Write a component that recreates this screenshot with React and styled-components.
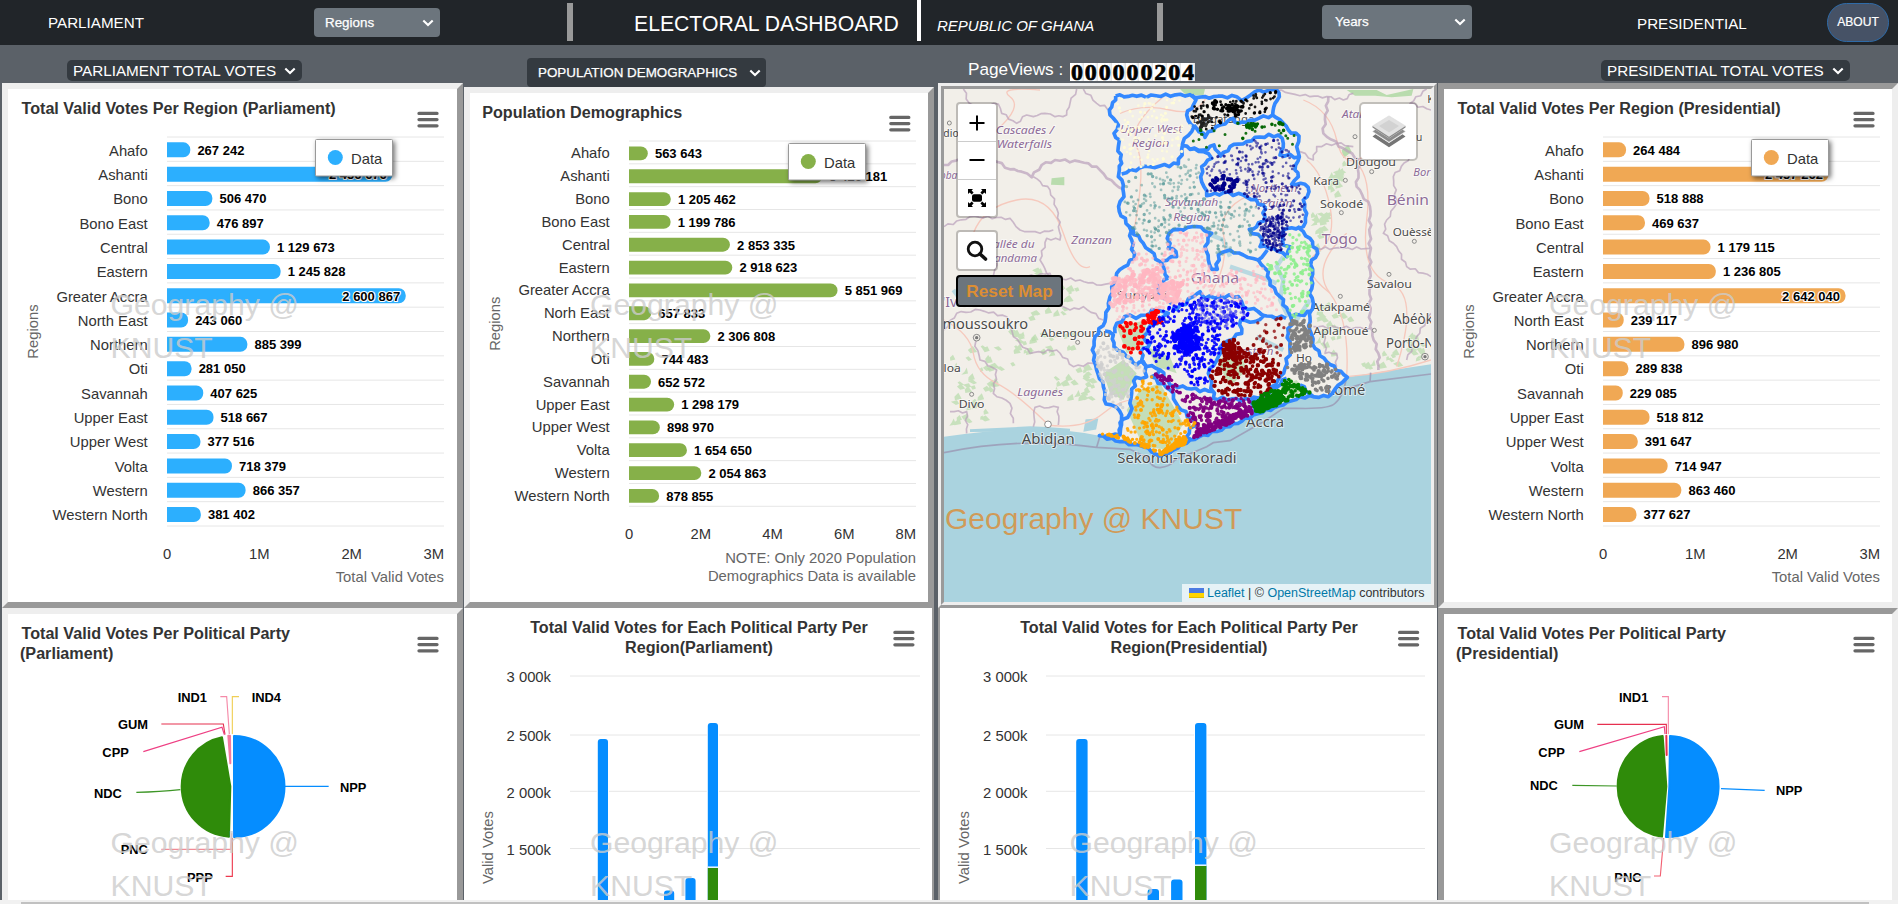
import React from "react";
import styled, { createGlobalStyle } from "styled-components";

const GlobalStyle = createGlobalStyle`
  *, *::before, *::after { box-sizing: border-box; }
  body { margin: 0; font-family: "Liberation Sans", Arial, sans-serif; overflow: hidden; }
  svg { display: block; }
  button { font-family: inherit; }
`;

const Page = styled.div`
  width: 1898px;
  height: 904px;
  display: flex;
  flex-direction: column;
  overflow: hidden;
  background: #5b6168;
`;

/* ---------- header ---------- */

const Header = styled.header`
  height: 45px;
  flex: none;
  display: flex;
  align-items: flex-start;
  background: #212529;
  color: #fff;
`;

const NavText = styled.span`
  margin-left: ${(p) => p.$gap}px;
  margin-top: ${(p) => p.$top}px;
  width: ${(p) => p.$w}px;
  font-size: ${(p) => p.$size || 15.2}px;
  line-height: 20px;
  font-style: ${(p) => (p.$italic ? "italic" : "normal")};
  white-space: nowrap;
`;

const Divider = styled.span`
  width: ${(p) => p.$w || 6}px;
  height: ${(p) => (p.$light ? 41 : 38)}px;
  margin-left: ${(p) => p.$gap}px;
  margin-top: ${(p) => (p.$light ? 0 : 3)}px;
  background: ${(p) => (p.$light ? "#fff" : "#999")};
`;

const Select = styled.button`
  display: flex;
  align-items: center;
  justify-content: space-between;
  width: ${(p) => p.$w}px;
  height: ${(p) => p.$h}px;
  margin: ${(p) => p.$top}px 0 0 ${(p) => p.$gap}px;
  padding: ${(p) => p.$pad};
  border: 0;
  border-radius: ${(p) => p.$radius || 4}px;
  background: ${(p) => (p.$dark ? "#343a40" : "#6c757d")};
  color: #fff;
  font-size: ${(p) => p.$size || 13.4}px;
  line-height: 1;
  white-space: nowrap;
  -webkit-text-stroke: ${(p) => (p.$size ? 0 : 0.25)}px #fff;
`;

const About = styled.button`
  width: 62px;
  height: 39px;
  margin: 3px 0 0 80px;
  padding: 0 0 1px;
  border: 1px solid #2f6ba8;
  border-radius: 20px;
  background: #465266;
  color: #fff;
  font-size: 12.1px;
  -webkit-text-stroke: 0.2px #fff;
`;

/* ---------- panels ---------- */

const Board = styled.main`
  height: 855px;
  flex: none;
  display: grid;
  grid-template-columns: 461px 470px 499px 460px;
  column-gap: 1px;
  padding-left: 2px;
  overflow: hidden;
`;

const Column = styled.section`
  display: flex;
  flex-direction: column;
  margin-left: ${(p) => p.$shift || 0}px;
  width: ${(p) => p.$w}px;
`;

const Toolbar = styled.div`
  height: ${(p) => p.$h}px;
  flex: none;
  display: flex;
  align-items: flex-start;
`;

const Panel = styled.div`
  position: relative;
  flex: none;
  width: 100%;
  height: ${(p) => p.$h}px;
  border: 6px ${(p) => p.$edge} #eee;
  background: #fff;
  border-color: ${(p) =>
    p.$edge === "outset" ? "#eee #999 #999 #eee" : p.$edge === "inset" ? "#999 #eee #eee #999" : "#eee"};
  border-style: ${(p) => (p.$edge === "ridge" ? "ridge" : "solid")};
  overflow: hidden;
`;

const ColumnPanel = styled.div`
  position: relative;
  flex: none;
  height: 292px;
  background: #fff;
  border-left: ${(p) => (p.$left ? 2 : 0)}px solid #999;
  border-right: ${(p) => (p.$right ? 2 : 0)}px solid #999;
`;

const Watermark = styled.div`
  position: absolute;
  left: ${(p) => p.$x}px;
  top: ${(p) => p.$y}px;
  width: ${(p) => (p.$wide ? 320 : 200)}px;
  font-size: ${(p) => (p.$wide ? 30 : 30.2)}px;
  line-height: 43px;
  color: ${(p) => (p.$wide ? "rgba(221,136,42,0.75)" : "rgba(204,204,204,0.8)")};
  pointer-events: none;
`;

const PageViews = styled.div`
  display: flex;
  align-items: center;
  height: 19px;
  margin: 15px 0 0 30px;
  color: #fff;
  font-size: 17.2px;
  span { width: 102px; white-space: pre; }
`;

const Counter = styled.div`
  display: flex;
  height: 18px;
  margin-top: 4px;
  background: #fff;
  overflow: hidden;
  b {
    width: 13.9px;
    text-align: center;
    color: #000;
    font: bold 24px/19px "Liberation Serif", serif;
    -webkit-text-stroke: 0.7px #000;
    background: linear-gradient(90deg, #fff 75%, #dedede);
  }
`;

const ScrollTrack = styled.div`
  height: 4px;
  flex: none;
  padding: 2px 29px 0 21px;
  background: #f1f1f1;
`;
const ScrollThumb = styled.div`
  height: 2px;
  background: #c1c1c1;
`;

/* ---------- chart text ---------- */

const Title = styled.text`
  font-size: 16.15px;
  font-weight: bold;
  fill: #333;
`;
const AxisText = styled.text`
  font-size: 14.8px;
  fill: ${(p) => (p.$soft ? "#666" : "#333")};
`;
const DataLabel = styled.text`
  font-size: 13px;
  font-weight: bold;
  fill: #000;
  stroke: #fff;
  stroke-width: 2.2px;
  stroke-linejoin: round;
  paint-order: stroke;
`;
const LegendBox = styled.rect`
  fill: #fff;
  stroke: #999;
  filter: drop-shadow(2px 2px 2.5px rgba(0, 0, 0, 0.55));
`;

function Chevron() {
  return (
    <svg width="12" height="8" viewBox="0 0 12 8" fill="none">
      <path d="M1.3 1.4 6 6l4.7-4.6" stroke="#fff" strokeWidth="2.1" />
    </svg>
  );
}

function Burger({ x, y }) {
  return (
    <path
      d={`M${x + 1.6} ${y}h18M${x + 1.6} ${y + 6.2}h18M${x + 1.6} ${y + 12.4}h18`}
      stroke="#666"
      strokeWidth="3.3"
      strokeLinecap="round"
    />
  );
}

const spaced = (n) => String(n).replace(/\B(?=(\d{3})+$)/g, " ");

const NAMES = ["Ahafo", "Ashanti", "Bono", "Bono East", "Central", "Eastern", "Greater Accra", "North East", "Northern", "Oti", "Savannah", "Upper East", "Upper West", "Volta", "Western", "Western North"];
const POP_NAMES = NAMES.map((n) => (n === "North East" ? "Norh East" : n));
const PARL = [267242, 2456676, 506470, 476897, 1129673, 1245828, 2600867, 243060, 885399, 281050, 407625, 518667, 377516, 718379, 866357, 381402];
const PRES = [264484, 2457262, 518888, 469637, 1179115, 1236805, 2642040, 239117, 896980, 289838, 229085, 518812, 391647, 714947, 863460, 377627];
const POP = [563643, 5426181, 1205462, 1199786, 2853335, 2918623, 5851969, 657833, 2306808, 744483, 652572, 1298179, 898970, 1654650, 2054863, 878855];

function BarChart({ title, titleX, w, h, names, values, color, left, right, bottom, max, ticks, barH, barShift, nameShift, labelShift, inside, legendX, burgerX, axisY, notes, regionsY }) {
  const top = 48;
  const step = (bottom - top) / values.length;
  const lines = Array.from({ length: values.length + 1 }, (_, i) => top + i * step);
  return (
    <svg width={w} height={h} viewBox={`0 0 ${w} ${h}`}>
      <Title x={titleX} y="25">{title}</Title>
      <Burger x={burgerX} y={24.4} />
      {lines.map((y) => (
        <path key={y} d={`M${left} ${y}H${right}`} stroke="#e6e6e6" />
      ))}
      {values.map((v, i) => {
        const mid = top + (i + 0.5) * step;
        const end = left + ((right - left) * v) / max - 1.4;
        const t = mid + barShift - barH / 2;
        const r = 6.9;
        const isIn = inside.includes(i);
        return (
          <g key={names[i]}>
            <AxisText x="139.7" y={mid + nameShift} textAnchor="end">{names[i]}</AxisText>
            <path d={`M${left} ${t}H${end - r}a${r} ${r} 0 0 1 ${r} ${r}V${t + barH - r}a${r} ${r} 0 0 1 ${-r} ${r}H${left}z`} fill={color} />
            <DataLabel x={isIn ? end - 5.6 : end + 7.1} y={mid + labelShift} textAnchor={isIn ? "end" : "start"}>{spaced(v)}</DataLabel>
          </g>
        );
      })}
      {ticks.map(([t, v]) => {
        const last = v === max;
        return (
          <AxisText key={t} x={last ? right : left + ((right - left) * v) / max} y={axisY} textAnchor={last ? "end" : "middle"}>{t}</AxisText>
        );
      })}
      {notes.map(([t, y]) => (
        <AxisText key={t} $soft x={right} y={y} textAnchor="end">{t}</AxisText>
      ))}
      <AxisText $soft textAnchor="middle" transform={`translate(30.3 ${regionsY}) rotate(-90)`}>Regions</AxisText>
      <LegendBox x={legendX} y="50.5" width="77" height="36.5" rx="1" />
      <circle cx={legendX + 19.8} cy="68.5" r="7.5" fill={color} />
      <AxisText x={legendX + 35.5} y="74.5">Data</AxisText>
    </svg>
  );
}

const votesLayout = {
  w: 449, h: 513, names: NAMES, left: 159, right: 436, bottom: 437, max: 3e6,
  ticks: [["0", 0], ["1M", 1e6], ["2M", 2e6], ["3M", 3e6]], barH: 15, barShift: 0.7, nameShift: 6.5, labelShift: 5.5,
  inside: [1, 6], legendX: 307.5, burgerX: 409.4, axisY: 470, notes: [["Total Valid Votes", 492.6]], regionsY: 242.5, titleX: 13.5,
};

/* ---------- party charts ---------- */

function StackChart({ x0, w, cx, region, left, right, labelX, axisX, burgerX, bars, bw }) {
  const grid = [["3 000k", 676], ["2 500k", 735], ["2 000k", 791.3], ["1 500k", 848.5]];
  return (
    <svg width={w} height="292" viewBox={`${x0} 608 ${w} 292`}>
      <Title x={cx} y="633" textAnchor="middle">Total Valid Votes for Each Political Party Per</Title>
      <Title x={cx} y="653" textAnchor="middle">{region}</Title>
      <Burger x={burgerX} y={632.4} />
      {grid.map(([t, y]) => (
        <g key={t}>
          <path d={`M${left} ${y}H${right}`} stroke="#e6e6e6" />
          <AxisText x={labelX} y={y + 6.2} textAnchor="end">{t}</AxisText>
        </g>
      ))}
      <AxisText $soft textAnchor="middle" transform={`translate(${axisX} 847.5) rotate(-90)`}>Valid Votes</AxisText>
      {bars.map(([x, y, split]) => (
        <g key={x}>
          <rect x={x} y={y} width={bw} height="300" rx="3" fill="#058dff" stroke="#fff" strokeWidth="2" paintOrder="stroke" />
          {split && <rect x={x} y={split} width={bw} height="100" fill="#2f8b0a" />}
          {split && <path d={`M${x} ${split - 0.8}h${bw}`} stroke="#fff" strokeWidth="1.4" />}
        </g>
      ))}
    </svg>
  );
}

const PartyLabel = styled.text`
  font-size: 38.7px;
  font-weight: bold;
  fill: #000;
`;

function PieChart({ x0, originX, lines, slices, connectors, labels }) {
  return (
    <svg width="449" height="286" viewBox={`${x0} 614 449 286`}>
      <Title x={x0 + 13.5} y="639">{lines[0]}</Title>
      <Title x={x0 + 12} y="658.6">{lines[1]}</Title>
      <Burger x={x0 + 409.4} y={638.4} />
      <g transform={`translate(${originX} 600) scale(0.33333)`} fill="none" strokeWidth="3.4">
        {connectors.map(([d, c]) => <path key={d} d={d} stroke={c} />)}
        {slices.map(([d, c]) => <path key={d} d={d} fill={c} stroke={c} strokeWidth="6" strokeLinejoin="round" />)}
        {labels.map(([t, x, y]) => <PartyLabel key={t} x={x} y={y}>{t}</PartyLabel>)}
      </g>
    </svg>
  );
}

/* ---------- map ---------- */

const LAND_OUTLINE = "557,288 620,289 780,284 800,293 850,290 920,290 935,302 962,285 975,275 1040,270 1048,290 1035,310 1028,345 1060,370 1075,390 1107,408 1100,440 1108,470 1095,510 1105,530 1085,553 1125,553 1137,575 1120,600 1130,640 1120,680 1108,685 1140,715 1163,760 1145,780 1148,850 1138,880 1150,910 1138,940 1140,990 1155,1045 1190,1085 1252,1132 1225,1155 1195,1190 1110,1190 1060,1215 970,1245 900,1280 780,1320 730,1350 690,1368 640,1340 570,1325 508,1307 570,1305 575,1245 560,1222 528,1212 520,1160 500,1110 487,1050 495,1010 525,965 535,910 540,890 560,820 612,775 605,720 598,680 568,635 570,605 582,590 580,555 565,530 568,510 575,490 565,440 568,420 552,400 565,375 540,345 538,330 557,300 557,288";

const INNER = [
  "785,284 798,300 790,315 770,345 775,362 792,380 758,430 755,450 745,492 690,498 630,503 575,522",
  "792,375 825,412 835,395 870,375 910,355 925,370 960,360 1028,345",
  "757,437 780,448 820,450 852,435 872,468 900,440 950,425 975,412 1045,405 1060,430 1050,465 1108,470",
  "780,448 820,455 845,475 815,500 812,530 822,560 830,587 880,578 940,585 1000,615 1005,650 980,680 958,688 995,715 990,740 1030,745 1070,770 1080,740 1060,735 1060,690 1110,680",
  "598,680 640,730 690,785 715,835",
  "695,783 740,770 738,755 715,745 717,700 745,688 800,680 845,700 825,740 835,780 845,808 862,808 865,765 900,750 940,765 985,780 1012,750",
  "985,780 1015,815 1020,855 1050,890 1075,935 1085,960 1075,1000 1080,1050 1065,1105 1050,1130 1020,1175",
  "715,835 685,855 690,880 725,912",
  "725,925 740,928 790,890 810,875 825,895 870,888 925,890 940,920 985,935 1000,948 975,965 932,960 935,1000 880,1030 865,1070 835,1120 845,1150 850,1195 960,1200 1020,1180",
  "985,935 1010,948 1068,955", "1085,950 1110,945 1145,935",
  "525,993 550,1005 552,1040 590,1070 620,1095 640,1085 650,1130 618,1132 605,1180 600,1240 570,1268 570,1305",
  "555,1000 560,970 600,945 618,955 650,945 665,930 700,935 715,940 655,985 640,1010 660,1030 632,1055 640,1090 690,1110 665,1130 720,1170 745,1220 795,1265 770,1310 785,1320",
  "690,1110 720,1155 770,1165 850,1175", "975,1240 965,1210 1020,1178 1070,1135", "1110,1155 1150,1190",
];

/* breaks each straight boundary segment into short uneven steps */
function rough(points, amount = 5) {
  const pts = points.split(" ").map((p) => p.split(",").map(Number));
  const out = [pts[0]];
  for (let i = 1; i < pts.length; i++) {
    const [ax, ay] = pts[i - 1];
    const [bx, by] = pts[i];
    const len = Math.hypot(bx - ax, by - ay);
    const n = Math.max(1, Math.round(len / 14));
    for (let k = 1; k < n; k++) {
      const off = Math.sin(ax * 1.3 + ay * 0.7 + k * 2.4) * amount;
      out.push([ax + ((bx - ax) * k) / n - ((by - ay) / len) * off, ay + ((by - ay) * k) / n + ((bx - ax) / len) * off]);
    }
    out.push([bx, by]);
  }
  return out.map((p) => p.map((n) => n.toFixed(1)).join(",")).join(" ");
}

// [polygon, colour, count, radius, opacity]
const CLUSTERS = [
  ["562,296 780,290 765,350 785,380 745,480 580,510 570,440 550,345", "#fffcd8", 120, 4, 0.8],
  ["800,300 925,298 975,280 1038,275 1025,335 910,350 830,395 780,350", "#000", 95, 4.2, 0.9],
  ["845,300 940,320 930,345 850,330", "#000", 45, 5, 1],
  ["800,355 850,350 830,390 800,380", "#222", 18, 5, 0.9],
  ["790,395 910,370 1030,355 1100,410 1100,455 1065,455 1050,400 960,405 870,450 770,440", "#006400", 26, 4.5, 0.9],
  ["950,370 990,370 980,385 950,385", "#006400", 16, 5, 1],
  ["1045,368 1063,368 1063,378 1045,378", "#006400", 3, 6, 1],
  ["830,480 970,420 1050,420 1095,480 1085,545 1130,570 1120,670 1030,670 940,580 830,575", "#00008b", 250, 4, 0.6],
  ["840,540 880,520 935,545 910,575 840,570", "#00008b", 36, 6, 1],
  ["985,660 1060,640 1075,680 1055,760 1000,745", "#00008b", 180, 3.8, 0.7],
  ["590,535 740,500 800,460 815,590 990,620 970,680 990,710 980,760 850,770 840,695 740,680 700,770 690,780 600,680 580,620", "#4c9494", 280, 4.2, 0.5],
  ["612,700 690,790 720,700 760,690 830,700 840,820 1000,790 1040,900 1060,940 960,920 820,885 740,915 560,960 545,860 605,790", "#ffb6c1", 360, 4.6, 0.65],
  ["545,830 700,800 690,900 540,920", "#ffb6c1", 130, 6.5, 0.85],
  ["690,850 760,840 740,910 695,895", "#ffb6c1", 50, 7, 0.9],
  ["1070,690 1110,690 1155,760 1135,930 1090,955 1060,880 1005,790 1070,770", "#90ee90", 110, 5, 0.9],
  ["650,935 690,930 700,970 655,970", "#f00", 32, 6, 1],
  ["565,970 650,960 630,1080 570,1040", "#f00", 32, 6, 1],
  ["700,930 800,890 940,910 970,950 920,970 860,1070 830,1160 770,1155 700,1105 640,1050 650,985", "#00f", 360, 4.8, 0.9],
  ["800,890 930,900 960,940 870,990 800,960", "#3838ef", 100, 4.2, 0.55],
  ["730,1000 760,975 800,985 810,1040 770,1065 735,1045", "#00f", 105, 7, 1],
  ["500,1020 560,1040 650,1110 610,1140 580,1240 530,1200 500,1090", "#cfcfcf", 120, 5, 0.8],
  ["880,1030 990,1050 1065,1105 1010,1185 860,1190 840,1130", "#8b0000", 235, 5.6, 1],
  ["960,970 1070,950 1060,1070 970,1050", "#8b0000", 28, 5, 0.75],
  ["880,1020 930,1020 940,1080 870,1070", "#8b0000", 42, 6, 1],
  ["1080,960 1140,960 1145,1040 1080,1060", "#808080", 90, 5.5, 1],
  ["1070,1100 1190,1080 1240,1132 1180,1190 1090,1120", "#808080", 100, 5.5, 1],
  ["980,1195 1070,1130 1145,1180 1060,1205 980,1235", "#008000", 125, 5.5, 1],
  ["970,1210 1040,1180 1070,1200 980,1240", "#008000", 180, 7, 1],
  ["740,1170 850,1195 970,1195 960,1240 800,1305 760,1220", "#800080", 190, 5.4, 0.95],
  ["800,1290 960,1220 970,1240 790,1315", "#800080", 110, 6, 1],
  ["670,1120 720,1130 760,1180 730,1180", "#800080", 24, 5.5, 1],
  ["620,1150 665,1130 740,1220 795,1270 760,1320 690,1355 580,1300 610,1240", "#ffa500", 175, 5, 0.9],
  ["515,1302 570,1305 645,1330 690,1360 570,1315", "#ffa500", 50, 5, 1],
  ["720,1340 765,1310 765,1330 690,1362", "#ffa500", 70, 7, 1],
];

function scatter(polygon, count, seed) {
  const pts = polygon.split(" ").map((p) => p.split(",").map(Number));
  const xs = pts.map((p) => p[0]);
  const ys = pts.map((p) => p[1]);
  const [x0, x1, y0, y1] = [Math.min(...xs), Math.max(...xs), Math.min(...ys), Math.max(...ys)];
  let s = seed * 7919 + 13;
  const rnd = () => {
    s = (s * 1664525 + 1013904223) % 4294967296;
    return s / 4294967296;
  };
  const out = [];
  for (let k = 0; out.length < count && k < count * 20; k++) {
    const x = x0 + rnd() * (x1 - x0);
    const y = y0 + rnd() * (y1 - y0);
    let hit = false;
    for (let i = 0, j = pts.length - 1; i < pts.length; j = i++) {
      const [xi, yi] = pts[i];
      const [xj, yj] = pts[j];
      if (yi > y !== yj > y && x < ((xj - xi) * (y - yi)) / (yj - yi) + xi) hit = !hit;
    }
    if (hit) out.push([x, y]);
  }
  return out;
}

const dots = (pts, r) => pts.map(([x, y]) => `M${(x - r).toFixed(1)} ${y.toFixed(1)}a${r} ${r} 0 1 0 ${2 * r} 0a${r} ${r} 0 1 0 ${-2 * r} 0`).join("");

const FORESTS = ["42,1060 330,1000 340,1080 200,1130 260,1200 60,1230", "60,1100 180,1080 170,1260 60,1270", "360,1130 480,1090 480,1200 380,1200", "200,800 440,820 420,960 230,960", "1140,640 1190,640 1150,760 1140,730", "1170,560 1240,480 1220,600", "1160,900 1260,960 1200,1080 1150,1010", "1290,1090 1480,980 1490,1070 1300,1110", "230,990 440,1000 420,1060 240,1060"];

const ADMIN = [
  "100,267 118,310 150,320 205,312 215,340 260,370 290,345 310,350 345,340 375,350 410,345 420,310 440,267",
  "42,495 90,478 150,490 200,485 240,508 275,515 305,532 335,495 375,480 450,485 500,500 530,535 580,568",
  "310,530 360,570 385,640 390,720 350,715 330,780 350,820 380,835 450,840 500,855 540,850",
  "42,680 120,650 240,655 270,690 330,700 370,690",
  "200,780 190,840 230,880 300,870 350,890 420,930 460,920 520,960",
  "42,990 80,940 150,930 230,950 250,1010 300,1060 380,1050 430,1100 490,1090",
  "130,1010 150,1080 200,1110 190,1180 240,1210 250,1270",
  "110,1300 110,1235 60,1235", "310,1280 315,1222 385,1222 385,1275",
  "1195,290 1180,400 1240,445 1290,480 1280,560 1320,620 1320,980 1345,1060 1345,1110",
  "1040,270 1080,280 1140,290 1190,290 1240,300 1270,280",
  "1110,455 1150,480 1160,440 1220,430 1270,440",
  "1440,470 1390,530 1400,610 1370,660 1360,700 1400,740 1430,800 1503,830",
  "1160,745 1240,745 1320,745", "1150,980 1320,985", "1185,1000 1185,1060 1220,1060 1220,1100", "1503,940 1460,1010 1430,1080",
  "270,870 290,830 360,820 400,870", "1490,267 1440,310 1503,330", "460,267 500,310 545,330",
];
const ROADS = [
  "M42 960Q120 1000 130 1060T200 1150 350 1270",
  "M130 700Q160 620 260 600T400 700 480 800",
  "M200 390Q280 320 240 290T330 270",
  "M570 340Q640 310 720 330T830 290",
  "M610 700Q650 500 620 440T700 290",
  "M830 900Q900 800 880 700T1040 560",
  "M1130 480Q1180 520 1200 620T1160 760 1200 880",
  "M1250 1130Q1260 960 1200 880T1250 700",
  "M1250 1130Q1380 1120 1503 1080",
  "M1250 470Q1330 500 1310 660T1380 850 1400 1100",
  "M350 1275Q460 1290 520 1240T640 1200",
  "M1120 300Q1200 330 1220 420T1300 470",
];
// [name, x, baseline, width, kind]
const PLACES = [
  ["Cascades /", 197, 402, 175, 1], ["Waterfalls", 200, 445, 166, 1], ["Zanzan", 424, 733, 122, 1], ["Vallée du", 170, 743, 144, 1], ["Bandama", 172, 787, 149, 1],
  ["Upper West", 570, 399, 187, 1], ["Region", 605, 441, 113, 1], ["Savannah", 705, 619, 160, 1], ["Region", 730, 664, 111, 1],
  ["Northern", 962, 575, 140, 1], ["Region", 975, 620, 113, 1], ["Ghana", 782, 848, 145, 2], ["Togo", 1175, 733, 107, 2], ["Bénin", 1370, 614, 127, 2],
  ["Atakora", 1236, 353, 122, 1], ["Borgou", 1450, 529, 110, 1], ["Lagunes", 262, 1188, 137, 1], ["Woroba", -24, 538, 106, 1], ["Côte d'Ivoire", -92, 922, 250, 2], ["Eastern", 915, 1064, 115, 1],
  ["Kara", 1150, 555, 77], ["Sokodé", 1170, 625, 130], ["Djougou", 1248, 499, 150], ["Ouèssè", 1388, 708, 122], ["Savalou", 1310, 864, 136], ["Atakpamé", 1145, 932, 175],
  ["Aplahoué", 1150, 1004, 165], ["Abéòkúta", 1390, 971, 180], ["Porto-Novo", 1368, 1045, 212], ["Lomé", 1190, 1185, 116], ["Accra", 948, 1282, 114], ["Abidjan", 275, 1331, 159],
  ["Sekondi-Takoradi", 562, 1389, 358], ["Yamoussoukro", -10, 988, 304], ["Abengourou", 332, 1011, 210], ["Divo", 86, 1223, 77], ["Sunyani", 560, 897, 152], ["Daloa", -6, 1115, 98],
  ["Bolgatanga", 788, 370, 185], ["Ho", 1098, 1087, 48], ["u", 1458, 424, 19], ["Kandi", 1492, 308, 90], ["dio", 40, 411, 46],
];
const TOWNS = [[58, 369], [1275, 410], [1325, 515], [1246, 541], [1234, 638], [1453, 724], [1377, 823], [1231, 889], [1333, 991], [125, 1183], [443, 1027], [140, 1013, 1], [1485, 1070, 1], [354, 1273, 2]];

const placeSize = (name, width, kind) => {
  if (kind === 2) return 42;
  if (kind === 1) return 35;
  if (name.length === 1) return 33;
  return ["Accra", "Abidjan", "Sekondi-Takoradi", "Lomé", "Yamoussoukro", "Porto-Novo", "Abéòkúta"].includes(name) ? 41 : 35;
};

const MapBox = styled.div`
  position: relative;
  width: 487px;
  height: 513px;
  overflow: hidden;
  background: #aad3df;
`;
const PlaceName = styled.text`
  font-family: "Noto Sans", sans-serif;
  font-style: ${(p) => (p.$kind === 1 ? "italic" : "normal")};
  fill: ${(p) => (p.$kind ? "#8d6b98" : "#4a4a4a")};
  stroke: #fff;
  stroke-opacity: 0.65;
  stroke-width: 5px;
  paint-order: stroke;
`;
const Controls = styled.div`
  position: absolute;
  left: 12px;
  top: 13px;
  display: flex;
  flex-direction: column;
  align-items: flex-start;
`;
const ControlGroup = styled.div`
  width: 42px;
  margin-bottom: ${(p) => p.$after || 0}px;
  border: 2px solid rgba(0, 0, 0, 0.22);
  border-radius: 4px;
  background: #fff;
  background-clip: padding-box;
`;
const ControlButton = styled.div`
  height: 37.3px;
  display: flex;
  align-items: center;
  justify-content: center;
  & + & { border-top: 1px solid #ccc; }
`;
const ResetButton = styled.button`
  width: 107px;
  height: 32px;
  margin-top: 4px;
  padding: 0;
  border: 2px solid #000;
  border-radius: 4px;
  background: #6c757d;
  color: #dc8e33;
  font-size: 17.3px;
  font-weight: bold;
`;
const LayersControl = styled.div`
  position: absolute;
  left: 415px;
  top: 12.5px;
  width: 59px;
  height: 59px;
  display: flex;
  align-items: center;
  justify-content: center;
  border: 2px solid rgba(0, 0, 0, 0.2);
  border-radius: 5px;
  background: #fff;
  background-clip: padding-box;
`;
const Attribution = styled.div`
  position: absolute;
  right: 0;
  bottom: 0;
  display: flex;
  align-items: center;
  width: 249px;
  height: 18px;
  padding-left: 7px;
  background: rgba(255, 255, 255, 0.7);
  color: #333;
  font-size: 12.5px;
  white-space: pre;
  svg { margin-right: 3px; }
  a { color: #0078a8; }
`;

function ElectionMap() {
  return (
    <MapBox>
      <svg width="487" height="513" viewBox="42 267 1461 1539">
        <path d="M42 267H1503V1093L1345 1117 1252 1132 1195 1190 1110 1190 1060 1215 970 1245 900 1280 780 1320 730 1350 690 1368 640 1340 570 1325 508 1307Q330 1268 42 1310Z" fill="#f2efe9" />
        {FORESTS.map((f, i) => <path key={f} d={scatter(f, 24, i + 50).map(([x, y], k) => `M${x} ${y}l${6 + (k % 5) * 3} ${-4 - (k % 3) * 4}l${4 + (k % 4) * 3} ${10 + (k % 3) * 4}l${-10 - (k % 3) * 5} 4z`).join("")} fill="#b9dcae" opacity="0.75" />)}
        <path d="M365 535l38-4v25l-40-2zM1250 270l90 0 30 15 80-18-5 20-60 5-50-5-60 0zM750 267h75l-5 20-55-5zM1235 450l20-15 10 20-25 20z" fill="#b9dcae" />
        <path d="M590 1230l40-60 60-20 70 120-40 80-80-10zM560 980l90-20-10 80-50 20zM520 1120l60-40 40 40-40 80-40-20zM860 1080l70-30 20 60-50 50zM650 1040l70 30 20 50-60-20zM1050 1160l50-20 20 30-40 20z" fill="#c4deb8" />
        <path d="M400 1296Q290 1290 120 1292L300 1283 350 1285 420 1290M470 1262l30-2-5 25-30 5z" fill="#aad3df" stroke="#aad3df" strokeWidth="8" />
        <path d="M1075 950L1050 900 1060 840 1040 800 1060 770M1040 850L990 830 900 800M900 770L880 720 830 700M1060 1050L980 1010M70 870l30 40 20-10M1140 900l-40 60" stroke="#aad3df" strokeWidth="13" fill="none" opacity=".8" />
        {ROADS.map((d) => <path key={d} d={d} fill="none" stroke="#f6c9bd" strokeWidth="4" />)}
        {ADMIN.map((d, i) => <polyline key={d} points={rough(d, 4)} fill="none" stroke="#b9a0bb" strokeLinejoin="round" strokeWidth={i === 1 || i === 9 ? 8 : 5} opacity=".7" />)}
        <path d="M42 1358Q270 1310 500 1342L600 1348 650 1372Q665 1404 690 1403 720 1400 735 1380L830 1340 850 1328 900 1322 1000 1265 1060 1225 1100 1225Q1200 1228 1215 1210 1240 1190 1250 1130M500 1342L510 1308M1252 1165L1320 1145 1503 1122M1320 1145L1322 1118" fill="none" stroke="#9a93b0" strokeWidth="5" opacity=".75" />
        {TOWNS.map(([x, y, k]) => (
          <g key={x}>
            <circle cx={x} cy={y} r={k ? 10 : 6} fill={k === 2 ? "#fff" : "#f2efe9"} stroke="#777" strokeWidth="2.5" />
            {k === 1 && <circle cx={x} cy={y} r="5" fill="#777" />}
          </g>
        ))}
        {PLACES.map(([t, x, y, w, k]) => <PlaceName key={t + y} $kind={k} x={x} y={y} textLength={w} lengthAdjust="spacingAndGlyphs" fontSize={placeSize(t, w, k)}>{t}</PlaceName>)}
        <g fill="none" stroke="#3388ff" strokeWidth="11" strokeLinejoin="round">
          <polyline points={rough(LAND_OUTLINE, 4)} />
          {INNER.map((p) => <polyline key={p} points={rough(p, 5)} />)}
        </g>
        {CLUSTERS.map(([poly, c, n, r, o], i) => {
          const pts = scatter(poly, n, i + 1);
          const cut = Math.floor(n * 0.75);
          return (
            <g key={poly} fill={c}>
              <path d={dots(pts.slice(0, cut), r)} opacity={o} />
              <path d={dots(pts.slice(cut), r * 1.2)} opacity={Math.min(1, o + 0.2)} />
            </g>
          );
        })}
      </svg>
      <Watermark $wide $x={1} $y={408}>Geography @ KNUST</Watermark>
      <Controls>
        <ControlGroup $after={12}>
          <ControlButton><svg width="16" height="16" viewBox="0 0 16 16"><path d="M8 .5v15M.5 8h15" stroke="#000" strokeWidth="2" /></svg></ControlButton>
          <ControlButton><svg width="16" height="16" viewBox="0 0 16 16"><path d="M.5 8h15" stroke="#000" strokeWidth="2" /></svg></ControlButton>
          <ControlButton>
            <svg width="18" height="18" viewBox="0 0 18 18">
              <rect x="4" y="5.2" width="10" height="7.6" rx="2" />
              <path d="M0 0h5L3.6 1.5 5.6 3.6 3.8 5.4 1.6 3.4 0 5zM18 0v5l-1.6-1.6-2.2 2-1.8-1.8 2-2.1L13 0zM0 18v-5l1.6 1.6 2.2-2 1.8 1.8-2 2.1L5 18zM18 18h-5l1.4-1.5-2-2.1 1.8-1.8 2.2 2L18 13z" />
            </svg>
          </ControlButton>
        </ControlGroup>
        <ControlGroup>
          <ControlButton>
            <svg width="22" height="22" viewBox="0 0 22 22" fill="none" stroke="#111">
              <circle cx="9" cy="9" r="6.8" strokeWidth="2.8" />
              <path d="M14 14l5.5 5" strokeWidth="3.6" strokeLinecap="round" />
            </svg>
          </ControlButton>
        </ControlGroup>
        <ResetButton>Reset Map</ResetButton>
      </Controls>
      <LayersControl>
        <svg width="34" height="33" viewBox="0 0 34 33">
          <path d="M.5 21.5L17 32.2l16.5-10.7-3-2.2L17 28 3.5 19.3z" fill="#757575" />
          <path d="M.5 16.5L17 27.2l16.5-10.7-3-2.2L17 23 3.5 14.3z" fill="#8c8c8c" stroke="#eee" strokeWidth=".6" />
          <path d="M.5 11L17 21.8 33.5 11 17 .8z" fill="#e2e2e2" stroke="#ddd" strokeWidth=".6" />
          <path d="M7 11L17 17.5 27 11 17 5z" fill="#d2d2d2" />
          <path d="M.5 11L17 21.8 33.5 11v1.6L17 23.2.5 12.6z" fill="#8a8a8a" />
        </svg>
      </LayersControl>
      <Attribution>
        <svg width="15" height="10" viewBox="0 0 15 10"><path fill="#4c7be1" d="M0 0h15v5H0z" /><path fill="#ffd500" d="M0 5h15v5H0z" /><path fill="#e0bc00" d="M0 9h15v1H0z" /></svg>
        <a>Leaflet</a> | © <a>OpenStreetMap</a> contributors
      </Attribution>
    </MapBox>
  );
}

/* ---------- page ---------- */

export default function App() {
  return (
    <Page>
      <GlobalStyle />
      <Header>
        <NavText $gap={48} $top={13} $w={98}>PARLIAMENT</NavText>
        <Select $gap={168} $top={8} $w={126} $h={29} $pad="0 6px 0 11px">Regions<Chevron /></Select>
        <Divider $gap={127} />
        <NavText $gap={61} $top={14} $w={267} $size={21.2}>ELECTORAL DASHBOARD</NavText>
        <Divider $light $w={4} $gap={15.5} />
        <NavText $gap={16.5} $top={16} $w={160} $size={15} $italic>REPUBLIC OF GHANA</NavText>
        <Divider $gap={60} />
        <Select $gap={159} $top={5} $w={150} $h={34} $pad="0 6px 0 13px">Years<Chevron /></Select>
        <NavText $gap={165} $top={14} $w={110}>PRESIDENTIAL</NavText>
        <About>ABOUT</About>
      </Header>
      <Board>
        <Column $w={461}>
          <Toolbar $h={38}>
            <Select $dark $gap={65} $top={15} $w={235} $h={21} $radius={5} $size={15.25} $pad="0 6px">PARLIAMENT TOTAL VOTES<Chevron /></Select>
          </Toolbar>
          <Panel $h={525} $edge="outset">
            <BarChart {...votesLayout} title="Total Valid Votes Per Region (Parliament)" values={PARL} color="#2caffe" />
            <Watermark $x={102.5} $y={194}>Geography @ KNUST</Watermark>
          </Panel>
          <Panel $h={310} $edge="outset">
            <PieChart
              x0={8} originX={0} lines={["Total Valid Votes Per Political Party", "(Parliament)"]}
              connectors={[
                ["M661 290H680L688 402", "#f58aa8"], ["M717 290H697V402", "#f0cf55"], ["M484 372H670L675 404", "#e6304f"], ["M430 455L666 382 673 404", "#ee3f83"],
                ["M409 577Q480 576 541 569", "#3d9626"], ["M855 559H986", "#058dff"], ["M484 748H692L695 700", "#f28b95"], ["M677 829H697V714", "#ed3a4f"],
              ]}
              slices={[
                ["M702 408A151 151 0 0 1 702 711Z", "#058dff"], ["M666 412A151 151 0 0 0 545 559A151 151 0 0 0 687 710L691 559Z", "#2f8b0a"],
                ["M685 407H690L691 490Z", "#f5799f"],
              ]}
              labels={[["IND1", 533, 305], ["IND4", 755, 305], ["GUM", 354, 387], ["CPP", 307, 470], ["NDC", 282, 594], ["NPP", 1020, 575], ["PNC", 362, 762], ["PPP", 561, 845]]}
            />
            <Watermark $x={102.5} $y={207}>Geography @ KNUST</Watermark>
          </Panel>
        </Column>

        <Column $w={470}>
          <Toolbar $h={42}>
            <Select $dark $gap={63} $top={13} $w={239} $h={29} $pad="0 5px 0 11px">POPULATION DEMOGRAPHICS<Chevron /></Select>
          </Toolbar>
          <Panel $h={521} $edge="outset">
            <BarChart
              title="Population Demographics" titleX={12.2} w={458} h={509} names={POP_NAMES} values={POP} color="#86b049" left={159} right={446} bottom={413.3}
              max={8e6} ticks={[["0", 0], ["2M", 2e6], ["4M", 4e6], ["6M", 6e6], ["8M", 8e6]]} barH={13.8} barShift={1} nameShift={6} labelShift={5.8}
              inside={[]} legendX={318.5} burgerX={419.2} axisY={446} regionsY={230.7}
              notes={[["NOTE: Only 2020 Population", 470], ["Demographics Data is available", 488.2]]}
            />
            <Watermark $x={120} $y={190}>Geography @ KNUST</Watermark>
          </Panel>
          <ColumnPanel $right>
            <StackChart x0={464} w={468} cx={699} region="Region(Parliament)" left={570} right={920} labelX={551} axisX={492.7} burgerX={893.3} bw={10.2} bars={[[597.8, 739], [664, 890.5], [685.4, 878], [707.8, 723, 868]]} />
            <Watermark $x={126} $y={213}>Geography @ KNUST</Watermark>
          </ColumnPanel>
        </Column>

        <Column $w={499} $shift={3}>
          <Toolbar $h={38}>
            <PageViews>
              <span>PageViews :</span>
              <Counter>{"000000204".split("").map((d, i) => <b key={i}>{d}</b>)}</Counter>
            </PageViews>
          </Toolbar>
          <Panel $h={525} $edge="ridge"><ElectionMap /></Panel>
          <ColumnPanel $left>
            <StackChart x0={940} w={497} cx={1189} region="Region(Presidential)" left={1046} right={1425} labelX={1027.5} axisX={968.7} burgerX={1398} bw={11.4} bars={[[1076.2, 739], [1147.6, 889], [1171.1, 879.5], [1195, 723, 866]]} />
            <Watermark $x={129.5} $y={213}>Geography @ KNUST</Watermark>
          </ColumnPanel>
        </Column>

        <Column $w={460} $shift={3}>
          <Toolbar $h={38}>
            <Select $dark $gap={163} $top={15} $w={249} $h={21} $radius={5} $size={15.25} $pad="0 6px">PRESIDENTIAL TOTAL VOTES<Chevron /></Select>
          </Toolbar>
          <Panel $h={525} $edge="inset">
            <BarChart {...votesLayout} title="Total Valid Votes Per Region (Presidential)" values={PRES} color="#f0a854" />
            <Watermark $x={105} $y={194}>Geography @ KNUST</Watermark>
          </Panel>
          <Panel $h={310} $edge="inset">
            <PieChart
              x0={1444} originX={1430} lines={["Total Valid Votes Per Political Party", "(Presidential)"]}
              connectors={[
                ["M696 290H715V402", "#f58aa8"], ["M502 373H709V402", "#e6304f"], ["M448 455L703 380 705 402", "#ee3f83"],
                ["M427 556L560 558", "#3d9626"], ["M873 566L1004 571", "#058dff"], ["M672 828H691L701 714", "#f26072"],
              ]}
              slices={[
                ["M720 408A151 151 0 1 1 708 711L718 559Z", "#058dff"], ["M698 408A151 151 0 0 0 563 559A151 151 0 0 0 696 710L709 559Z", "#2f8b0a"],
                ["M709 407L710 465Z", "#e6304f"],
              ]}
              labels={[["IND1", 567, 305], ["GUM", 372, 387], ["CPP", 325, 470], ["NDC", 300, 570], ["NPP", 1038, 585], ["PNC", 553, 845]]}
            />
            <Watermark $x={105} $y={207}>Geography @ KNUST</Watermark>
          </Panel>
        </Column>
      </Board>
      <ScrollTrack><ScrollThumb /></ScrollTrack>
    </Page>
  );
}
